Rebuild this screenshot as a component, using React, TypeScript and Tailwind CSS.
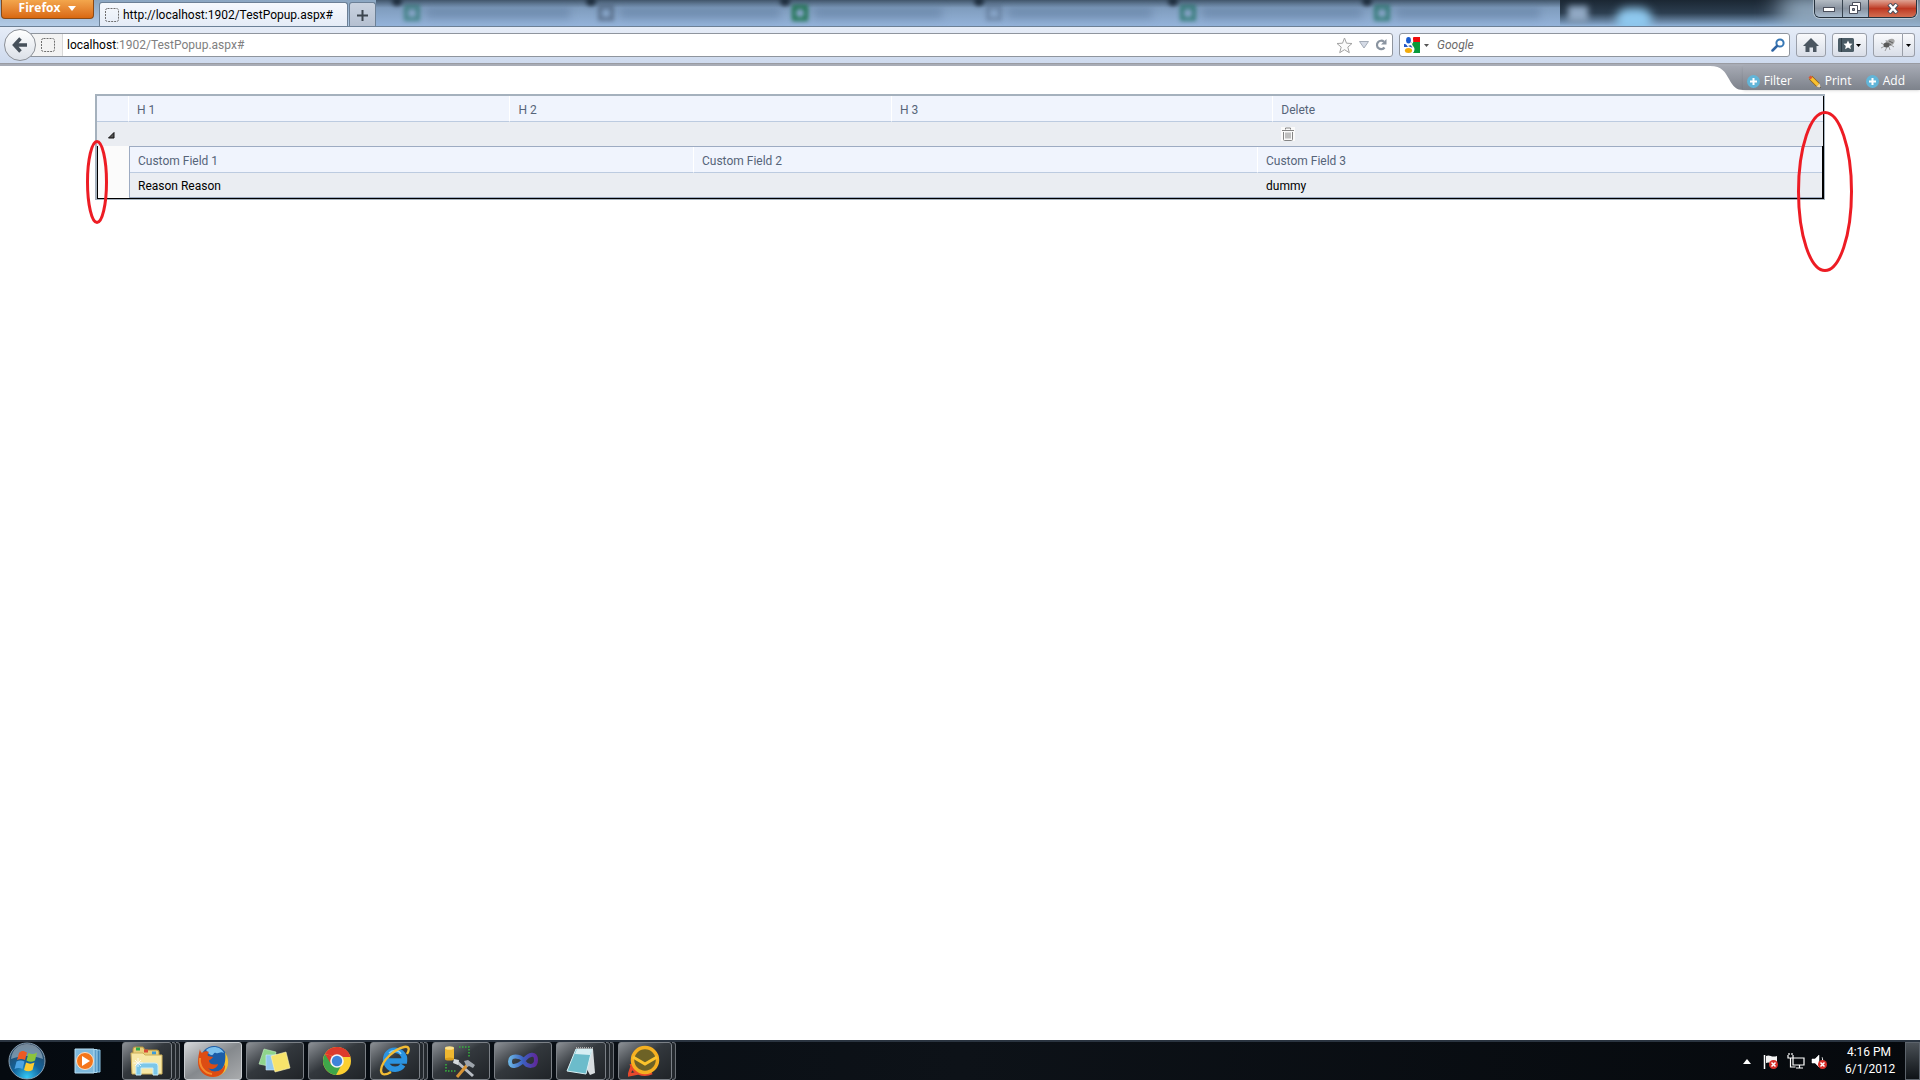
import React from 'react';
import { clsx } from 'clsx';

interface IconProps {
  className?: string;
}

const BACKGROUND_TABS = [
  { icon: 'border-emerald-800/50', bar: 'w-36' },
  { icon: 'border-slate-700/50', bar: 'w-40' },
  { icon: 'border-green-800/80', bar: 'w-32' },
  { icon: 'border-slate-700/30', bar: 'w-36' },
  { icon: 'border-emerald-800/60', bar: 'w-40' },
  { icon: 'border-emerald-800/60', bar: 'w-36' },
];

/* ---------- browser icons ---------- */

const EmptyPageIcon = ({ className }: IconProps) => (
  <svg width="14" height="14" viewBox="0 0 14 14" className={className}>
    <rect x="0.5" y="0.5" width="13" height="13" rx="2" fill="none" stroke="#6f6f6f" strokeDasharray="2 1" />
  </svg>
);

const Caret = ({ className }: IconProps) => (
  <svg width="5" height="3" viewBox="0 0 5 3" className={className}>
    <path d="M0 0h5L2.5 3z" fill="currentColor" />
  </svg>
);

const BackIcon = () => (
  <svg width="16" height="16" viewBox="0 0 16 16">
    <path d="M8.5 1.5 2.5 8l6 6.500M3 8h12" fill="none" stroke="#46505a" strokeWidth="3.500" />
  </svg>
);

const StarIcon = () => (
  <svg width="17" height="17" viewBox="0 0 17 17">
    <path d="M8.500 1l2 5.200 5.500.3-4.200 3.600 1.500 5.600-4.800-3-4.800 3 1.500-5.600L1 6.500l5.500-.3z" fill="#fbfbfb" stroke="#a3a3a3" strokeLinejoin="round" />
  </svg>
);

const ReloadIcon = () => (
  <svg width="12" height="12" viewBox="0 0 12 12">
    <path d="M9.500 8.500A4.200 4.200 0 1 1 9 2.800" fill="none" stroke="#8a94a0" strokeWidth="2.200" />
    <path d="M11.500 0v5.500H6z" fill="#8a94a0" />
  </svg>
);

const GoogleIcon = () => (
  <svg width="16" height="16" viewBox="0 0 16 16">
    <rect width="16" height="16" fill="#fff" />
    <path d="M8.500 0H16v5.500H9z" fill="#f00b0b" />
    <path d="M7.500 5H16v11H9c3-4 1-6-1-8z" fill="#0a9a3a" />
    <path d="M0 7c2-.5 3 1 4 3H0z" fill="#2457c5" />
    <ellipse cx="4.500" cy="3.200" rx="2.400" ry="3.200" fill="#1a5cd0" />
    <path d="M4 9c3-2 6 0 5 2z" fill="#1f4fb0" />
    <ellipse cx="4.500" cy="13.500" rx="3.600" ry="2.500" fill="#f3ab0a" />
    <path d="M9 0c-2 2 1 4-1 6-2 3 3 4 1 9" fill="none" stroke="#fff" strokeWidth="1.200" />
  </svg>
);

const SearchIcon = () => (
  <svg width="14" height="14" viewBox="0 0 14 14">
    <circle cx="9" cy="5" r="3.600" fill="none" stroke="#3677b5" strokeWidth="2" />
    <path d="M6 8 1.500 12.500" stroke="#2f64a3" strokeWidth="2.500" strokeLinecap="round" />
  </svg>
);

const HomeIcon = () => (
  <svg width="16" height="14" viewBox="0 0 16 14">
    <path d="M8 0l8 8h-2.500v6H10V9.500H6.500V14h-4V8H0z" fill="#4b5661" />
  </svg>
);

const BookmarksIcon = () => (
  <svg width="16" height="14" viewBox="0 0 16 14">
    <rect width="16" height="14" rx="1.500" fill="#4b5c66" />
    <path d="M3.500 0v14" stroke="#2f3c45" />
    <path d="M10 2.500l1.400 3 3.100.3-2.300 2.200.7 3.300-2.900-1.800-2.900 1.800.7-3.300-2.300-2.200 3.100-.3z" fill="#fff" />
  </svg>
);

const BugIcon = () => (
  <svg width="16" height="14" viewBox="0 0 16 14">
    <path d="M1 5l4 2M1 10l4-2M5 13l2-4M10 12 9 9M6 2l1 4M14 9l-3-2" stroke="#888" strokeWidth="0.800" />
    <ellipse cx="10" cy="4.500" rx="5" ry="3.200" transform="rotate(-30 10 4.500)" fill="#a5a5a5" />
    <ellipse cx="6.500" cy="7" rx="3" ry="2.500" fill="#5a5a5a" />
    <path d="M9 3l4 2M8 5l3 2" stroke="#5f5f5f" />
  </svg>
);

/* ---------- page icons ---------- */

const PlusBadge = () => (
  <svg width="13" height="13" viewBox="0 0 13 13">
    <circle cx="6.500" cy="6.500" r="6.500" fill="#62b5d8" />
    <path d="M6.500 3v7M3 6.500h7" stroke="#fff" strokeWidth="2" />
  </svg>
);

const PencilIcon = () => (
  <svg width="13" height="13" viewBox="0 0 13 13">
    <path d="M2.500 2.500 10 10" stroke="#8a5a16" strokeWidth="4.600" />
    <path d="M2.500 2.500 10 10" stroke="#f9c02e" strokeWidth="3.400" />
    <path d="M.5 2.500 2.500.5l2 2-2 2z" fill="#d9553b" />
    <path d="M8.500 11.500l3-3L13 13z" fill="#f3d9a8" />
    <path d="M11.500 12.500l1-1L13 13z" fill="#333" />
  </svg>
);

const TrashIcon = () => (
  <svg width="14" height="14" viewBox="0 0 14 14">
    <rect width="14" height="14" fill="#fafafa" />
    <path d="M4.500 2.500V1h5v1.500M1 3.500h12M2.500 5v7.500q0 1 1 1h7q1 0 1-1V5M5 5.500v6M7 5.500v6M9 5.500v6" fill="none" stroke="#858585" />
  </svg>
);

/* ---------- taskbar icons ---------- */

const StartOrb = () => (
  <svg width="38" height="38" viewBox="0 0 38 38">
    <defs>
      <radialGradient id="orb" cx="50%" cy="95%" r="90%">
        <stop offset="0" stopColor="#35c9f5" />
        <stop offset="0.450" stopColor="#12639c" />
        <stop offset="1" stopColor="#2b4259" />
      </radialGradient>
    </defs>
    <circle cx="19" cy="19" r="18" fill="url(#orb)" stroke="#8ba2b5" />
    <path d="M3 17C4 7 11 2 19 2s15 5 16 15c-10-4-22-4-32 0z" fill="#d5e2ec" opacity="0.450" />
    <path d="M11 11c3-3 5-2 8-.5L17 18c-3-1.500-5-1.500-8 0z" fill="#ee5a24" />
    <path d="M20.500 11c3 1.500 5 1.500 8.500-.5l-2 8c-3 2-6 1.500-8.500 0z" fill="#8cc43c" />
    <path d="M8.500 19.500c3-1.500 5-1.500 8 0l-2 7.500c-3-1.500-5-1.500-8 0z" fill="#4ba3e3" />
    <path d="M18 20.500c3 1.500 5.500 1.500 8.500 0l-2 7.500c-3 2-6 1.500-8.500 0z" fill="#fccb2f" />
  </svg>
);

const MediaPlayerIcon = () => (
  <svg width="28" height="26" viewBox="0 0 28 26">
    <path d="M8 2h18v22H8z" fill="#3f83b4" stroke="#8ec5e6" />
    <path d="M5 1.500h18v23H5z" fill="#5b9fcc" stroke="#a8d6ee" />
    <path d="M1 1h19v24H1z" fill="#7fb9dc" stroke="#b9def2" />
    <circle cx="11" cy="13" r="8.500" fill="#f4761b" stroke="#fde2c8" />
    <path d="M8 8l8 5-8 5z" fill="#fff" />
  </svg>
);

const ExplorerIcon = () => (
  <svg width="34" height="30" viewBox="0 0 34 30">
    <path d="M3 3q0-2 2-2h8l2 3h12q2 0 2 2v20H3z" fill="#e8cf7a" stroke="#b4923a" />
    <path d="M6 1.500h4v3H6z" fill="#2faa4b" />
    <path d="M14 3.500h4v3h-4z" fill="#d84a34" />
    <path d="M22 5.500h4v3h-4z" fill="#3b9bd9" />
    <path d="M1 7h12l2 2h17v19H2z" fill="#f7e8a6" stroke="#cdb05a" />
    <path d="M6 29V20q0-3 3-3h16q3 0 3 3v9h-5v-7H11v7z" fill="#7cc7e8" stroke="#c9ecf8" />
    <path d="M8 12v9M3.500 17h9M5 14l6 6M11 14l-6 6" stroke="#fff" opacity="0.800" />
  </svg>
);

const FirefoxIcon = () => (
  <svg width="32" height="32" viewBox="0 0 32 32">
    <circle cx="17" cy="14" r="13" fill="#1c5da8" />
    <path d="M9 5c5-5 15-4 18 3-4-2-5 1-8 0s-2 3-5 2-3-3-5-5z" fill="#7cc1ee" />
    <path d="M28 7c5 8 4 17-3 22-6 4-13 3-17-1 8 3 14 1 17-4 3-4 4-10 3-17z" fill="#f6c433" />
    <path d="M3 4c0 2 1 3 2 4 2-2 5-2 7-1-1 1-2 2-1 4l5 1c-1 2-4 3-4 4 1 4 5 4 9 3-1 5-7 6-10 4 5 6 14 4 17-4 1 7-4 13-12 13S1 26 1 17C1 12 2 8 3 4z" fill="#dd4c13" />
    <path d="M3 13c-1 8 4 15 12 16" fill="none" stroke="#f58a2c" strokeWidth="2" />
  </svg>
);

const StickyNotesIcon = () => (
  <svg width="34" height="28" viewBox="0 0 34 28">
    <path d="M6 2l12 3-3 15L1 17z" fill="#8fd48c" stroke="#c6efc2" strokeWidth="0.600" />
    <path d="M8 8h15v15H8z" fill="#8fc7ee" stroke="#cde8fb" strokeWidth="0.600" />
    <path d="M13 9l15-4 4 16-15 4z" fill="#f7e36b" stroke="#fdf5ba" strokeWidth="0.600" />
  </svg>
);

const ChromeIcon = () => (
  <svg width="30" height="30" viewBox="0 0 30 30">
    <circle cx="15" cy="15" r="14" fill="#fccf31" />
    <path d="M2.900 8A14 14 0 0 1 28.500 11H15z" fill="#dd3a2c" />
    <path d="M2.900 8A14 14 0 0 0 14 29l6-11-9 0z" fill="#3ea64a" />
    <path d="M2.900 8 9 18l6-7z" fill="#dd3a2c" />
    <circle cx="15" cy="15" r="6.800" fill="#f4f4f4" />
    <circle cx="15" cy="15" r="5.200" fill="#3f83d9" />
  </svg>
);

const ExplorerEIcon = () => (
  <svg width="34" height="32" viewBox="0 0 34 32">
    <path d="M25 20a9.500 9.500 0 1 1 1.500-4H10" fill="none" stroke="#2b93df" strokeWidth="5.500" />
    <path d="M11 8c4-4 10-3 12 1" fill="none" stroke="#8fd3fa" strokeWidth="1.500" />
    <path d="M29 9c3-5 2-8-3-7C17 4 4 15 3 25c0 6 5 5 10 2" fill="none" stroke="#f2bc35" strokeWidth="2.400" />
  </svg>
);

const ToolsIcon = () => (
  <svg width="34" height="34" viewBox="0 0 34 34">
    <path d="M1 4h9v11H1z" fill="#efb730" />
    <ellipse cx="5.500" cy="4" rx="4.500" ry="1.800" fill="#fbe08a" />
    <ellipse cx="5.500" cy="15" rx="4.500" ry="1.500" fill="#d99d1c" />
    <path d="M15 3h10v11M2 20v7h10" fill="none" stroke="#35b53c" strokeWidth="1.500" strokeDasharray="1.500 1.500" />
    <path d="M12 17l17 15" stroke="#b9bec4" strokeWidth="3" />
    <path d="M10 15l5 1-1 5-5-2z" fill="#d6dade" />
    <path d="M24 20 13 33" stroke="#d89434" strokeWidth="3" />
    <path d="M20 17l4-1 7 5-2 3-4-2-2 1z" fill="#9da4ab" />
  </svg>
);

const VisualStudioIcon = () => (
  <svg width="32" height="18" viewBox="0 0 32 18">
    <defs>
      <linearGradient id="vs">
        <stop offset="0" stopColor="#69b1e2" />
        <stop offset="0.500" stopColor="#3b5fc0" />
        <stop offset="1" stopColor="#5e2a9c" />
      </linearGradient>
    </defs>
    <path d="M17 8C13 4 3 2 3 9.500S12 14 17 8 29 0 29 8s-9 7-12 2" fill="none" stroke="url(#vs)" strokeWidth="4" />
  </svg>
);

const NotepadIcon = () => (
  <svg width="32" height="30" viewBox="0 0 32 30">
    <path d="M11 3h17l2 24-5 2z" fill="#d8dde0" />
    <path d="M11 3h16l-6 25L2 25z" fill="#6cbccb" stroke="#d9f0f4" />
    <path d="M12 3h15l-2 6-15-1z" fill="#d7eef3" />
    <path d="M11 2h17" stroke="#aaa" strokeWidth="2" strokeDasharray="1 1" />
  </svg>
);

const MailClientIcon = () => (
  <svg width="34" height="32" viewBox="0 0 34 32">
    <path d="M3 19c2 9 12 13 21 9M4 21 1 30l10-2" fill="none" stroke="#e8482c" strokeWidth="3" />
    <circle cx="17" cy="15" r="12.500" fill="#6d6226" stroke="#f5b021" strokeWidth="3.500" />
    <path d="M5 12l12 7 12-7" fill="none" stroke="#fbc42c" strokeWidth="3" />
  </svg>
);

const ErrorBadge = ({ x, y }: { x: number; y: number }) => (
  <g transform={`translate(${x} ${y})`}>
    <circle cx="4.500" cy="4.500" r="4.500" fill="#d8302a" />
    <path d="M2.500 2.500l4 4M6.500 2.500l-4 4" stroke="#fff" strokeWidth="1.500" />
  </g>
);

/* ---------- browser chrome ---------- */

const WindowButtons = () => (
  <div className="relative ml-auto mr-[3px] flex h-[18px] overflow-hidden rounded-b-md border border-t-0 border-[#26323e] ring-1 ring-white/40">
    <button aria-label="Minimize" className="flex w-7 items-end justify-center border-r border-[#37434f] bg-linear-to-b from-[#b4bcc4] via-[#8993a0] to-[#a9bccf] pb-1">
      <svg width="12" height="6" viewBox="0 0 12 6"><rect x="0.500" y="0.500" width="11" height="4" fill="#fff" stroke="#4b4f5c" /></svg>
    </button>
    <button aria-label="Restore" className="flex w-[26px] items-center justify-center border-r border-[#37434f] bg-linear-to-b from-[#b4bcc4] via-[#8993a0] to-[#a9bccf]">
      <svg width="13" height="13" viewBox="0 0 13 13">
        <path d="M3.500.5h8v8h-8z" fill="#fff" stroke="#4b4f5c" />
        <path d="M.5 3.500h8v8h-8z" fill="#fff" stroke="#4b4f5c" />
        <path d="M3.500 6.500h2v2h-2z" fill="#8a93a0" stroke="#4b4f5c" />
      </svg>
    </button>
    <button aria-label="Close" className="flex w-[47px] items-center justify-center bg-linear-to-b from-[#dfa394] via-[#bd3822] to-[#d36d51]">
      <svg width="12" height="11" viewBox="0 0 12 11">
        <path d="M2 1l8 9M10 1 2 10" stroke="#4b4f5c" strokeWidth="4.500" />
        <path d="M2.500 1.500l7 8M9.500 1.500l-7 8" stroke="#fff" strokeWidth="2.500" />
      </svg>
    </button>
  </div>
);

const TitleBar = () => (
  <div className="relative flex h-[27px] items-start overflow-hidden border-b border-[#6c8096] bg-linear-to-b from-[#1b2733] via-[#2c3e50] to-[#8fb2d8]">
    <div className="absolute inset-y-0 left-0 w-[376px] bg-linear-to-b from-[#8ba6c1] to-[#b3cbe6]" />
    <div className="absolute -right-5 -top-1 h-8 w-40 bg-[#9db5cb] blur-md" />
    <div className="absolute right-[268px] top-2 h-6 w-9 rounded-full bg-[#8ec8ee] blur-[5px]" />
    <button className="relative ml-px flex h-[19px] w-[93px] items-center justify-center gap-2 rounded-b-[4px] border border-t-0 border-[#8a4a16] bg-linear-to-b from-[#f3a64c] to-[#d9680f] pb-0.5 font-['Open_Sans',sans-serif] text-[12px] font-bold text-white">
      Firefox
      <svg width="8" height="5" viewBox="0 0 8 5"><path d="M0 0h8L4 5z" fill="#fff" /></svg>
    </button>
    <div className="relative ml-[5px] mt-0.5 flex h-[25px] w-[249px] items-center gap-1 rounded-t-[3px] border border-b-0 border-[#6c8096] bg-linear-to-b from-[#f6f9fd] to-[#e4ebf6] pl-[5px] text-[12px] text-black">
      <EmptyPageIcon />
      <span className="whitespace-nowrap">http://localhost:1902/TestPopup.aspx#</span>
    </div>
    <button aria-label="New tab" className="relative ml-px mt-0.5 flex h-[25px] w-[27px] items-center justify-center rounded-t-[3px] border border-b-0 border-[#6c8096] bg-linear-to-b from-[#c9d2df] to-[#b4bfd0]">
      <svg width="11" height="11" viewBox="0 0 11 11"><path d="M5.500 0v11M0 5.500h11" stroke="#3c454e" strokeWidth="2" /></svg>
    </button>
    {/* Window behind the glass frame */}
    <div aria-hidden="true" className="relative flex h-full bg-linear-to-b from-[#42566b] via-[#7f9cbd] via-30% to-[#94b3da] pl-5">
      {BACKGROUND_TABS.map((tab, i) => (
        <div key={i} className="relative flex h-full w-[194px] items-center gap-1.5 pl-2">
          <div className="absolute -left-1 -top-1 size-2.5 rounded-full bg-[#1f2e3e] blur-[2px]" />
          <div className={clsx('size-4 border-4 blur-[2px]', tab.icon)} />
          <div className={clsx('h-2.5 bg-[#4d6a8c]/40 blur-[4px]', tab.bar)} />
        </div>
      ))}
      <div className="absolute -right-7 top-1.5 h-4 w-5 bg-[#91a9c4] blur-[3px]" />
    </div>
    <WindowButtons />
  </div>
);

const toolButton = 'flex h-6 items-center justify-center rounded-[3px] border border-[#9a9fa9] bg-linear-to-b from-[#f9fafc] to-[#d9dee8] text-black';

const AddressBar = () => (
  <div className="flex h-9 items-center gap-1.5 bg-linear-to-b from-[#e6ecf7] to-[#cedaee] pl-1 pr-[5px] text-[12px]">
    <div className="flex min-w-0 flex-1 items-center">
      <button aria-label="Back" className="z-10 flex size-8 shrink-0 items-center justify-center rounded-full border border-[#8b8f96] bg-linear-to-b from-white to-[#dbe0e8]">
        <BackIcon />
      </button>
      <div className="-ml-1.5 flex h-6 min-w-0 flex-1 items-center rounded-r-[3px] border border-[#8f959e] bg-white">
        <div className="flex h-full w-8 items-center border-r border-[#d8d8d8] bg-[#f3f3f3] pl-2.5">
          <EmptyPageIcon />
        </div>
        <label htmlFor="url" className="pl-1 text-black">localhost</label>
        <input id="url" className="min-w-0 flex-1 text-[#808080] outline-none" defaultValue=":1902/TestPopup.aspx#" />
        <div className="flex items-center gap-1.5 pr-[5px]">
          <StarIcon />
          <svg width="10" height="8" viewBox="0 0 10 8"><path d="M.5.5h9L5 7z" fill="#d5dbe6" stroke="#a4acb8" /></svg>
          <ReloadIcon />
        </div>
      </div>
    </div>
    <div className="flex h-6 w-[391px] items-center rounded-[3px] border border-[#8f959e] bg-white px-1">
      <GoogleIcon />
      <Caret className="ml-1 text-[#555]" />
      <input aria-label="Search" placeholder="Google" className="ml-2 min-w-0 flex-1 italic outline-none placeholder:text-[#6a6a6a]" />
      <SearchIcon />
    </div>
    <button aria-label="Home" className={clsx(toolButton, 'w-[30px]')}><HomeIcon /></button>
    <button aria-label="Bookmarks" className={clsx(toolButton, 'w-[35px]')}>
      <BookmarksIcon />
      <Caret className="ml-0.5" />
    </button>
    <div className="flex">
      <button aria-label="Firebug" className={clsx(toolButton, 'w-[30px] rounded-r-none')}><BugIcon /></button>
      <button aria-label="Firebug menu" className={clsx(toolButton, 'w-3 rounded-l-none border-l-0')}><Caret /></button>
    </div>
  </div>
);

/* ---------- page ---------- */

const PageActions = () => (
  <>
    <div className="h-[3px] border-t border-[#999ba2] bg-[#a8acb6]" />
    <div className="flex h-6 justify-end">
      <svg width="33" height="24" viewBox="0 0 33 24">
        <defs>
          <linearGradient id="actions" x1="0" y1="0" x2="0" y2="1">
            <stop offset="0" stopColor="#a5a9b3" />
            <stop offset="1" stopColor="#7d828b" />
          </linearGradient>
        </defs>
        <path d="M0 0c12 0 15 6 19 13 4 8 8 11 14 11V0z" fill="url(#actions)" />
      </svg>
      <nav className="flex items-center bg-linear-to-b from-[#a5a9b3] to-[#7d828b] pl-1 pr-[15px] pt-1.5 font-['Open_Sans',sans-serif] text-[12px] text-white shadow-sm">
        <a href="#" className="flex w-[61px] items-center gap-1"><PlusBadge />Filter</a>
        <a href="#" className="flex w-[58px] items-center gap-1"><PencilIcon />Print</a>
        <a href="#" className="flex items-center gap-1"><PlusBadge />Add</a>
      </nav>
    </div>
  </>
);

const headCell = 'h-[26px] border-b border-[#bccbe0] bg-[#f0f4fd] px-2 pb-0 pt-0.5 text-left font-normal text-[#566479]';
const bodyCell = 'h-6 px-2 pb-0 pt-0.5';
const divider = 'border-r border-r-white';

const DetailTable = () => (
  <table className="w-full table-fixed border-separate border-spacing-0 border border-r-0 border-[#9dabc2]">
    <thead>
      <tr>
        <th className={clsx(headCell, divider)}>Custom Field 1</th>
        <th className={clsx(headCell, divider)}>Custom Field 2</th>
        <th className={headCell}>Custom Field 3</th>
      </tr>
    </thead>
    <tbody>
      <tr className="bg-[#eaedf2] text-black">
        <td className={bodyCell}>Reason Reason</td>
        <td className={bodyCell} />
        <td className={bodyCell}>dummy</td>
      </tr>
    </tbody>
  </table>
);

const HierarchyGrid = () => (
  <div className="relative mx-[95px] mt-1 text-[12px] leading-4">
    <div className="border border-l-2 border-t-2 border-[#a5b1bd]">
      <table className="w-full table-fixed border-separate border-spacing-0 border-b border-r border-black">
        <colgroup>
          <col className="w-8" />
          <col className="w-[22.1%]" />
          <col className="w-[22.1%]" />
          <col className="w-[22.1%]" />
          <col />
        </colgroup>
        <thead>
          <tr>
            <th aria-label="Expand" className={clsx(headCell, divider)} />
            <th className={clsx(headCell, divider)}>H 1</th>
            <th className={clsx(headCell, divider)}>H 2</th>
            <th className={clsx(headCell, divider)}>H 3</th>
            <th className={headCell}>Delete</th>
          </tr>
        </thead>
        <tbody>
          <tr className="bg-[#eaedf2]">
            <td className="h-6 p-0">
              <button aria-label="Collapse row" className="ml-[11px] block pt-0.5">
                <svg width="7" height="7" viewBox="0 0 7 7"><path d="M6 .5V6H.5z" fill="#555" stroke="#111" /></svg>
              </button>
            </td>
            <td colSpan={3} />
            <td className="h-6 px-2 py-0">
              <button aria-label="Delete row" className="block"><TrashIcon /></button>
            </td>
          </tr>
          <tr>
            <td className="border-l border-black bg-[#fbfbfb] p-0" />
            <td colSpan={4} className="border-r border-black p-0"><DetailTable /></td>
          </tr>
        </tbody>
      </table>
    </div>
    {/* Hand-drawn marks around the stray borders */}
    <svg width="22" height="84" viewBox="0 0 22 84" className="pointer-events-none absolute -left-[9px] top-[46px]">
      <ellipse cx="11" cy="42" rx="9.500" ry="40.500" fill="none" stroke="#ed1c24" strokeWidth="3" />
    </svg>
    <svg width="56" height="161" viewBox="0 0 56 161" className="pointer-events-none absolute -right-7 top-[17px]">
      <ellipse cx="28" cy="80.500" rx="26.500" ry="79" fill="none" stroke="#ed1c24" strokeWidth="3" />
    </svg>
  </div>
);

/* ---------- taskbar ---------- */

interface TaskButtonProps {
  label: string;
  active?: boolean;
  /** number of extra window edges shown behind the button */
  stack?: number;
  children: React.ReactNode;
}

const TaskButton = ({ label, active, stack = 0, children }: TaskButtonProps) => (
  <div className="flex h-[38px] w-[58px]">
    <button
      aria-label={label}
      className={clsx(
        'flex min-w-0 flex-1 items-center justify-center rounded-[3px] border bg-linear-to-br',
        active ? 'border-[#c9cdd1] from-[#d5d7d9] via-[#85898d] to-[#a9abad]' : 'border-[#7b8086] from-[#8d9196] via-[#33383d] via-45% to-[#202428]'
      )}
    >
      {children}
    </button>
    {Array.from({ length: stack }, (_, i) => (
      <div key={i} className="w-1 rounded-r-[3px] border-y border-r border-[#6b7076] bg-[#23282d]" />
    ))}
  </div>
);

const Taskbar = () => (
  <footer className="flex h-10 items-center border-t-2 border-[#2a3440] bg-linear-to-r from-[#050a10] via-[#0d1218] to-[#06090d] text-white">
    <button aria-label="Start" className="ml-2"><StartOrb /></button>
    <button aria-label="Windows Media Player" className="ml-7"><MediaPlayerIcon /></button>
    <div className="ml-5 flex gap-1">
      <TaskButton label="Windows Explorer" stack={2}><ExplorerIcon /></TaskButton>
      <TaskButton label="Firefox" active><FirefoxIcon /></TaskButton>
      <TaskButton label="Sticky Notes"><StickyNotesIcon /></TaskButton>
      <TaskButton label="Chrome"><ChromeIcon /></TaskButton>
      <TaskButton label="Internet Explorer" stack={2}><ExplorerEIcon /></TaskButton>
      <TaskButton label="SQL Tools"><ToolsIcon /></TaskButton>
      <TaskButton label="Visual Studio"><VisualStudioIcon /></TaskButton>
      <TaskButton label="Notepad" stack={2}><NotepadIcon /></TaskButton>
      <TaskButton label="Mail" stack={1}><MailClientIcon /></TaskButton>
    </div>
    <div className="ml-auto flex h-full items-center">
      <button aria-label="Show hidden icons" className="mr-3">
        <svg width="8" height="5" viewBox="0 0 8 5"><path d="M0 5h8L4 0z" fill="#fff" /></svg>
      </button>
      <svg width="66" height="18" viewBox="0 0 66 18">
        <path d="M1.500 3v14" stroke="#fff" strokeWidth="1.500" />
        <path d="M3 4c4-2 5 2 11 0v7c-5 2-7-2-11 0z" fill="#f2f2f2" />
        <ErrorBadge x={6} y={8} />
        <path d="M30 6h11v7H30zM33 16h7M36.500 13v3M25 3v3h5V3M27.500 6v9h5M26 1v2M29 1v2" fill="none" stroke="#fff" strokeWidth="1.200" />
        <path d="M49 7h3l4-4v12l-4-4h-3zM59 5q2 4 0 8" fill="#fff" stroke="#fff" strokeWidth="0.500" />
        <ErrorBadge x={55} y={8} />
      </svg>
      <div className="ml-4 mr-3 w-12 whitespace-nowrap text-center text-[12px] leading-[17px]">
        <div>4:16 PM</div>
        <div>6/1/2012</div>
      </div>
      <button aria-label="Show desktop" className="h-full w-[15px] border border-[#5c636b] bg-linear-to-b from-[#4b5157] to-[#0f1317]" />
    </div>
  </footer>
);

export default function App() {
  return (
    <div className="flex min-h-screen flex-col bg-white font-['Roboto','Noto_Sans',sans-serif]">
      <header>
        <TitleBar />
        <AddressBar />
      </header>
      <main className="flex-1">
        <PageActions />
        <HierarchyGrid />
      </main>
      <Taskbar />
    </div>
  );
}
